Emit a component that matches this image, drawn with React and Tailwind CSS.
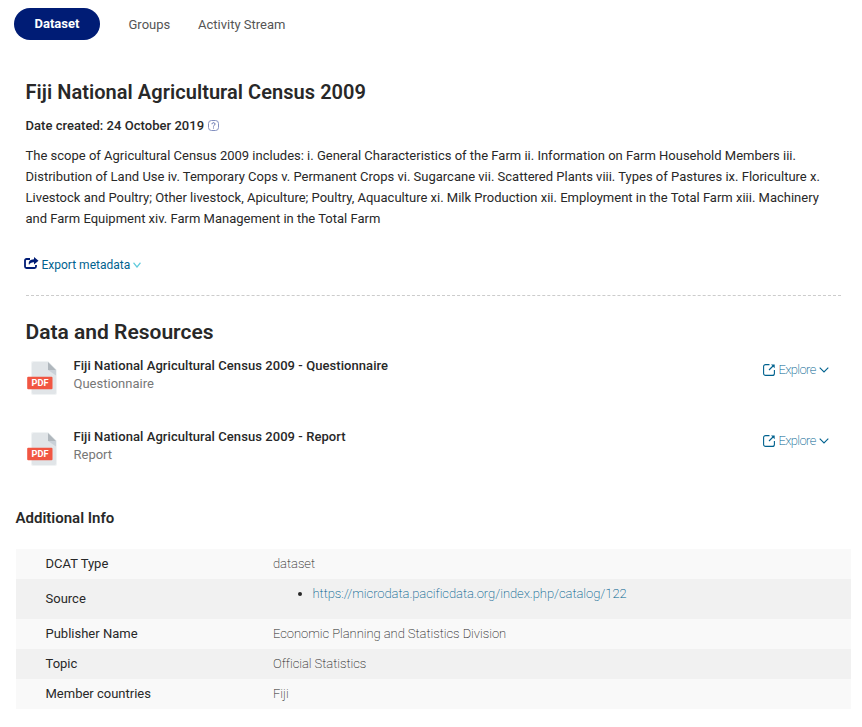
import React from "react";

const resources = [
  { title: "Fiji National Agricultural Census 2009 - Questionnaire", kind: "Questionnaire" },
  { title: "Fiji National Agricultural Census 2009 - Report", kind: "Report" },
];

const scope = [
  "The scope of Agricultural Census 2009 includes: i. General Characteristics of the Farm ii. Information on Farm Household Members iii.",
  "Distribution of Land Use iv. Temporary Cops v. Permanent Crops vi. Sugarcane vii. Scattered Plants viii. Types of Pastures ix. Floriculture x.",
  "Livestock and Poultry; Other livestock, Apiculture; Poultry, Aquaculture xi. Milk Production xii. Employment in the Total Farm xiii. Machinery",
  "and Farm Equipment xiv. Farm Management in the Total Farm",
];

function PdfIcon() {
  return (
    <svg className="h-9 w-8 shrink-0" viewBox="-1 0 32 36">
      <path d="M6 1h15l9 9v23a2 2 0 0 1-2 2H6a2 2 0 0 1-2-2V3a2 2 0 0 1 2-2z" fill="#f0f3f4" />
      <path d="M6.500 2h14.500l8 8v22.500a1.500 1.500 0 0 1-1.500 1.500H6.500a1.500 1.500 0 0 1-1.500-1.500v-29a1.500 1.500 0 0 1 1.500-1.500z" fill="#e1e5e8" />
      <path d="M21 10h8V15.500z" fill="#cad1d8" />
      <path d="M21 2l8 8h-8z" fill="#b0b7bd" />
      <rect x="0.200" y="16.700" width="25.300" height="12.600" rx="1" fill="#f15642" />
      <text x="13" y="26" textAnchor="middle" textLength="17" lengthAdjust="spacingAndGlyphs" fill="#fff" className="font-[Roboto,sans-serif] text-[8.6px] font-bold">PDF</text>
    </svg>
  );
}

function Chevron({ className }) {
  return (
    <svg className={className} viewBox="0 0 10 6" preserveAspectRatio="none" fill="none" stroke="currentColor">
      <path d="M0.700 0.700L5 5L9.300 0.700" />
    </svg>
  );
}

function Explore() {
  return (
    <a className="mt-[11px] flex h-5 items-center text-[#00628f]">
      <svg className="h-3 w-3" viewBox="0 0 12 12" fill="none" stroke="currentColor" strokeWidth="1.100">
        <path d="M6.500 .600H2.600A2 2 0 0 0 .600 2.600v6.800a2 2 0 0 0 2 2H9.400a2 2 0 0 0 2-2V6" />
        <path d="M6 6L10 2" />
        <path d="M8 .500h3.700v3.700z" fill="currentColor" stroke="none" />
      </svg>
      <span className="ml-[3.5px] w-[40.5px] text-[13px] font-extralight tracking-[-0.650px]">Explore</span>
      <Chevron className="h-[6px] w-[10px] stroke-[1.1]" />
    </a>
  );
}

function Row({ label, shaded, tall, children }) {
  return (
    <div className={`flex pl-[29.5px] ${tall ? "h-10" : "h-[30px]"} ${shaded ? "bg-[#f1f1f1]" : "bg-[#f9f9f9]"}`}>
      <div className="flex w-[227.5px] items-center">{label}</div>
      <div className={`font-extralight tracking-[-0.050px] ${tall ? "pt-[5px] leading-5" : "leading-[30px]"}`}>{children}</div>
    </div>
  );
}

export default function App() {
  return (
    <main className="h-[727px] w-[862px] overflow-hidden bg-white font-[Roboto,sans-serif] text-[13px] text-[#282828]">
      <nav className="flex h-12 pt-2 pl-[14px] leading-8 text-[#555]">
        <a className="h-8 w-[86px] rounded-full bg-[#001c75] text-center font-bold text-white">Dataset</a>
        <a className="ml-[28.5px] w-[69.5px] pt-px">Groups</a>
        <a className="pt-px">Activity Stream</a>
      </nav>

      <section className="mr-[21px] ml-[25.5px] h-[248px] border-b border-dashed border-[#ccc] pt-[30px]">
        <h1 className="h-7 text-[20px] leading-7 font-semibold tracking-[0.050px]">Fiji National Agricultural Census 2009</h1>
        <div className="mt-[10px] flex h-5 items-center font-medium tracking-[0.040px]">
          <span>Date created: 24 October 2019</span>
          <svg className="-mt-px ml-1 h-[11px] w-[11px]" viewBox="0 0 11 11" fill="none" stroke="#8390c0">
            <rect x=".500" y=".500" width="10" height="10" rx="3" />
            <path d="M4 4.200c0-2 3-2 3 0c0 1-1.500 1-1.500 2.300M5.500 7.500v1" stroke="#5767a8" />
          </svg>
        </div>
        <div className="mt-[9px] leading-[21px] whitespace-nowrap">
          {scope.map((line) => <p key={line}>{line}</p>)}
        </div>
        <a className="mt-[26px] -ml-[2px] flex h-5 items-center text-[12px] text-[#00628f]">
          <svg className="-mt-[5px] h-[12px] w-[15px]" viewBox="0 0 15 12" fill="none">
            <path d="M6 2H2.500A1.500 1.500 0 0 0 1 3.500v6A1.500 1.500 0 0 0 2.500 11h8a1.500 1.500 0 0 0 1.500-1.500V8" stroke="#001c75" strokeWidth="1.800" />
            <path d="M10 0L14.500 3.800L10 7.500V5.300C7.500 5.200 6 6 5 8C4 4.500 6 2.300 10 2.200z" fill="#001c75" />
          </svg>
          <span className="ml-[3px]">Export metadata</span>
          <Chevron className="ml-[3px] h-[6px] w-[8px] stroke-[1.5] text-[#5fcbdc]" />
        </a>
      </section>

      <section className="h-[209px] pt-[20px] pr-[33px] pl-[25.5px]">
        <h2 className="h-8 text-[21px] leading-8 font-semibold">Data and Resources</h2>
        {resources.map((item) => (
          <article key={item.kind} className="flex h-[71px] pt-[9px]">
            <div className="pt-[3px] pl-[0.5px]"><PdfIcon /></div>
            <div className="ml-[15.5px] flex-1 leading-[18px]">
              <h3 className="font-medium tracking-[0.065px]">{item.title}</h3>
              <p className="text-[#777]">{item.kind}</p>
            </div>
            <div className="-mt-[8px]"><Explore /></div>
          </article>
        ))}
      </section>

      <section className="mr-[11px] ml-4">
        <h2 className="-ml-[0.5px] h-[44px] text-[15px] leading-[26px] font-semibold">Additional Info</h2>
        <Row label="DCAT Type">dataset</Row>
        <Row label="Source" shaded tall>
          <ul className="ml-[39.5px] list-disc"><li className="text-[#282828]"><a className="text-[#00628f]">https://microdata.pacificdata.org/index.php/catalog/122</a></li></ul>
        </Row>
        <Row label="Publisher Name">Economic Planning and Statistics Division</Row>
        <Row label="Topic" shaded>Official Statistics</Row>
        <Row label="Member countries">Fiji</Row>
      </section>
    </main>
  );
}
